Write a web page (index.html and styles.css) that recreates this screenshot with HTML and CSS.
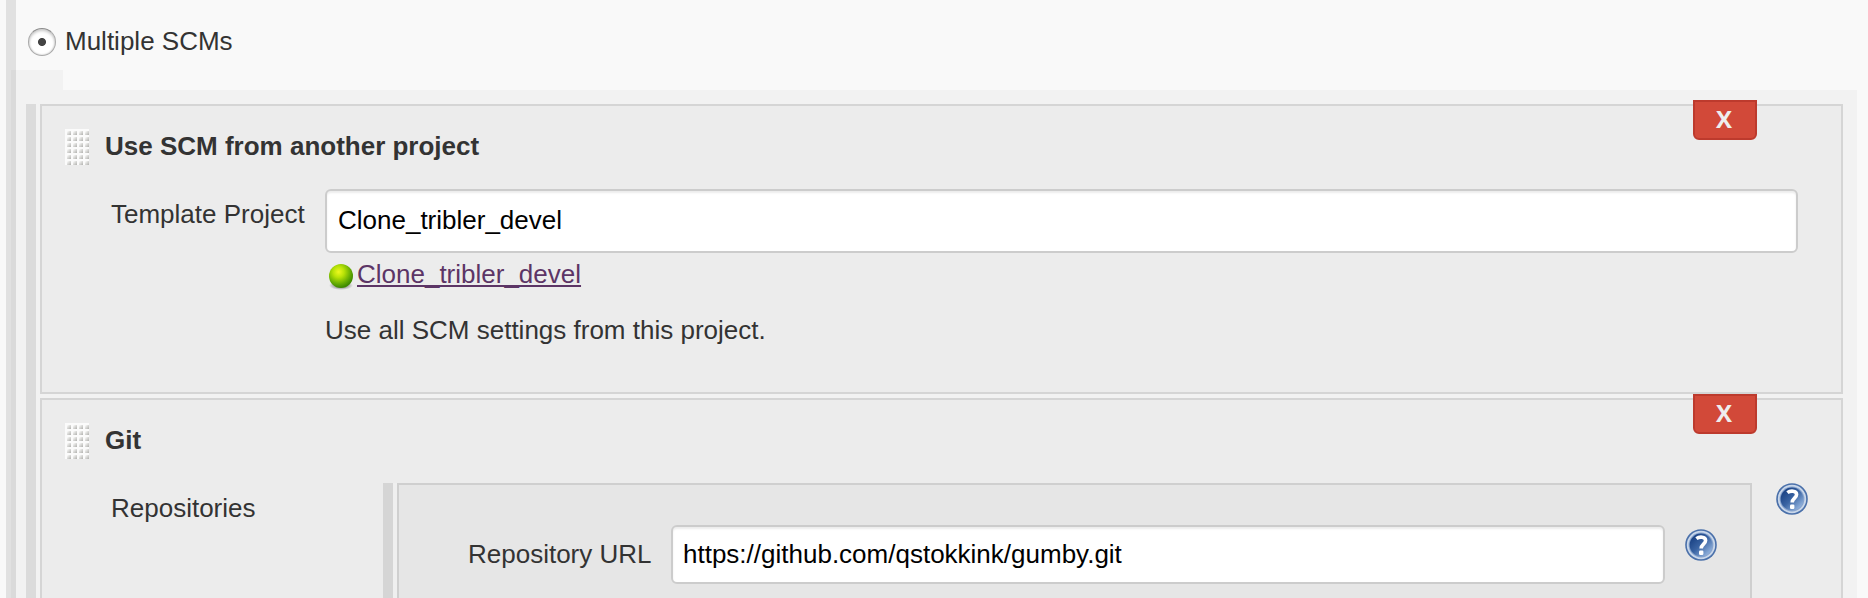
FILE: index.html
```html
<!DOCTYPE html>
<html lang="en">
<head>
<meta charset="utf-8">
<title>Source Code Management</title>
<link rel="stylesheet" href="styles.css">
</head>
<body>
<svg class="defs" width="0" height="0" aria-hidden="true">
  <defs>
    <linearGradient id="bump" x1="0" y1="0" x2="1" y2="1">
      <stop offset=".1" stop-color="#f8f8f7"/>
      <stop offset="1" stop-color="#b0b0ad"/>
    </linearGradient>
    <pattern id="dots" width="6" height="6" patternUnits="userSpaceOnUse">
      <rect width="6" height="6" fill="#fbfbfb"/>
      <rect x="2" y="2" width="4" height="4" fill="url(#bump)"/>
    </pattern>
    <radialGradient id="ball" cx=".4" cy=".33" r=".65">
      <stop offset="0" stop-color="#eef820"/>
      <stop offset=".35" stop-color="#b9e307"/>
      <stop offset=".75" stop-color="#68ae03"/>
      <stop offset="1" stop-color="#3f8a00"/>
    </radialGradient>
    <radialGradient id="shade">
      <stop offset=".4" stop-color="#000" stop-opacity=".4"/>
      <stop offset="1" stop-color="#000" stop-opacity="0"/>
    </radialGradient>
    <linearGradient id="blue" x1=".15" y1=".2" x2=".85" y2=".9">
      <stop offset="0" stop-color="#1d4587"/>
      <stop offset=".45" stop-color="#3a64a3"/>
      <stop offset="1" stop-color="#92b3de"/>
    </linearGradient>
    <symbol id="help" viewBox="0 0 32 32">
      <circle cx="16" cy="16" r="15.8" fill="#4a70aa"/>
      <circle cx="16" cy="16" r="14.2" fill="#c9d7ea"/>
      <circle cx="16" cy="16" r="12.4" fill="#87a3cd"/>
      <circle cx="16" cy="16" r="11.4" fill="url(#blue)"/>
      <path d="M11.4 9.6 C14 7.6 20.6 7.2 20.6 11.4 C20.6 15 16.2 15.2 16.2 19.4" fill="none" stroke="#fff" stroke-width="3.6"/>
      <rect x="14" y="21.6" width="4.4" height="4.4" rx="1.2" fill="#fff"/>
    </symbol>
  </defs>
</svg>
<main class="section">
  <label class="choice">
    <span class="radio"></span>
    <span>Multiple SCMs</span>
  </label>
  <div class="nested-tab"></div>
  <div class="nested">
    <div class="rail"></div>
    <div class="chunks">
      <section class="chunk">
        <button class="delete">X</button>
        <header class="chunk-head">
          <svg class="handle" width="24" height="36"><rect width="24" height="36" fill="url(#dots)"/></svg>
          <b>Use SCM from another project</b>
        </header>
        <div class="row">
          <span class="label template">Template Project</span>
          <div class="setting">
            <div class="input tall">Clone_tribler_devel</div>
            <div class="job">
              <svg width="32" height="32" viewBox="0 0 32 32">
                <ellipse cx="16" cy="25.5" rx="12" ry="4.5" fill="url(#shade)"/>
                <circle cx="16" cy="16" r="12" fill="url(#ball)"/>
              </svg>
              <a href="#">Clone_tribler_devel</a>
            </div>
            <p class="note">Use all SCM settings from this project.</p>
          </div>
        </div>
      </section>
      <section class="chunk git">
        <button class="delete">X</button>
        <header class="chunk-head">
          <svg class="handle" width="24" height="36"><rect width="24" height="36" fill="url(#dots)"/></svg>
          <b>Git</b>
        </header>
        <div class="row">
          <span class="label repositories">Repositories</span>
          <div class="repo-rail"></div>
          <div class="repo">
            <span class="repo-label">Repository URL</span>
            <div class="input">https://github.com/qstokkink/gumby.git</div>
            <svg class="help" width="32" height="32"><use href="#help"/></svg>
          </div>
          <svg class="help-outer" width="32" height="32"><use href="#help"/></svg>
        </div>
      </section>
    </div>
  </div>
</main>
</body>
</html>
```
FILE: styles.css
```css
* { box-sizing: border-box; }

body {
  margin: 0;
  height: 598px;
  overflow: hidden;
  background: #f9f9f9;
  color: #333;
  font: 26px/30px "Liberation Sans", Arial, sans-serif;
}

.defs { position: absolute; }
svg { display: block; flex: none; }

.section {
  height: 598px;
  margin-left: 6px;
  border-left: 10px solid #e1e1e1;
}

.choice {
  display: flex;
  gap: 9px;
  height: 70px;
  padding: 26px 0 0 12px;
}

.radio {
  width: 28px;
  height: 28px;
  margin-top: 2px;
  border: 1px solid #aaa;
  border-top-color: #8c8c8c;
  border-radius: 50%;
  background: radial-gradient(circle, #444 3.6px, transparent 4.4px), #fff;
  box-shadow: inset 0 2px 3px #ccc, inset 0 0 2px #bbb;
}

.nested-tab {
  width: 52px;
  height: 20px;
  margin-left: -5px;
  background: rgba(0, 0, 0, .027);
}

.nested {
  display: flex;
  gap: 4px;
  height: 508px;
  margin: 0 11px 0 -5px;
  padding: 14px 14px 0 15px;
  background: rgba(0, 0, 0, .027);
}

.rail { width: 10px; background: #dbdbdb; }

.chunks {
  display: flex;
  flex: 1;
  flex-direction: column;
  gap: 4px;
}

.chunk {
  position: relative;
  flex: none;
  height: 290px;
  border: 2px solid #d5d5d5;
  background: #ececec;
}

.git { height: 200px; border-bottom: 0; }

.delete {
  position: absolute;
  top: -6px;
  right: 84px;
  width: 64px;
  height: 40px;
  padding: 0 2px 2px 0;
  border: 2px solid #bd3a2d;
  border-radius: 0 0 6px 6px;
  background: #d24939;
  color: #eee;
  font: bold 24px/34px "Open Sans", sans-serif;
}

.chunk-head {
  display: flex;
  gap: 16px;
  height: 83px;
  padding: 23px 0 0 23px;
}

.chunk-head b { padding-top: 2px; }

.row { display: flex; }
.label { flex: none; padding-left: 69px; white-space: nowrap; }
.template { width: 283px; padding-top: 10px; }
.setting { width: 1473px; }

.input {
  width: 994px;
  height: 59px;
  padding: 12px 10px;
  border: 2px solid #ccc;
  border-radius: 6px;
  background: #fff;
  box-shadow: inset 0 2px 2px rgba(0, 0, 0, .075);
  color: #000;
}

.tall { width: 100%; height: 64px; padding: 14px 11px; }

.job { display: flex; height: 36px; padding-top: 6px; }
.job svg { margin-top: 1px; }
.job a {
  color: #5c3566;
  text-decoration-thickness: 2px;
  text-underline-offset: 2px;
}

.note { margin: 26px 0 0; }

.repositories { width: 340.5px; padding-top: 10px; }
.repo-rail {
  width: 10px;
  height: 115px;
  margin-right: 4.5px;
  background: #d5d5d5;
  box-shadow: 4px 0 0 #efefef;
}

.repo {
  display: flex;
  width: 1355px;
  height: 115px;
  padding: 40px 0 0 69px;
  border: 2px solid #cfcfcf;
  border-bottom: 0;
  background: #e6e6e6;
}

.repo-label { width: 203px; padding-top: 14px; white-space: nowrap; }
.help { margin: 4px 0 0 20px; }
.help-outer { margin-left: 24px; }
```
